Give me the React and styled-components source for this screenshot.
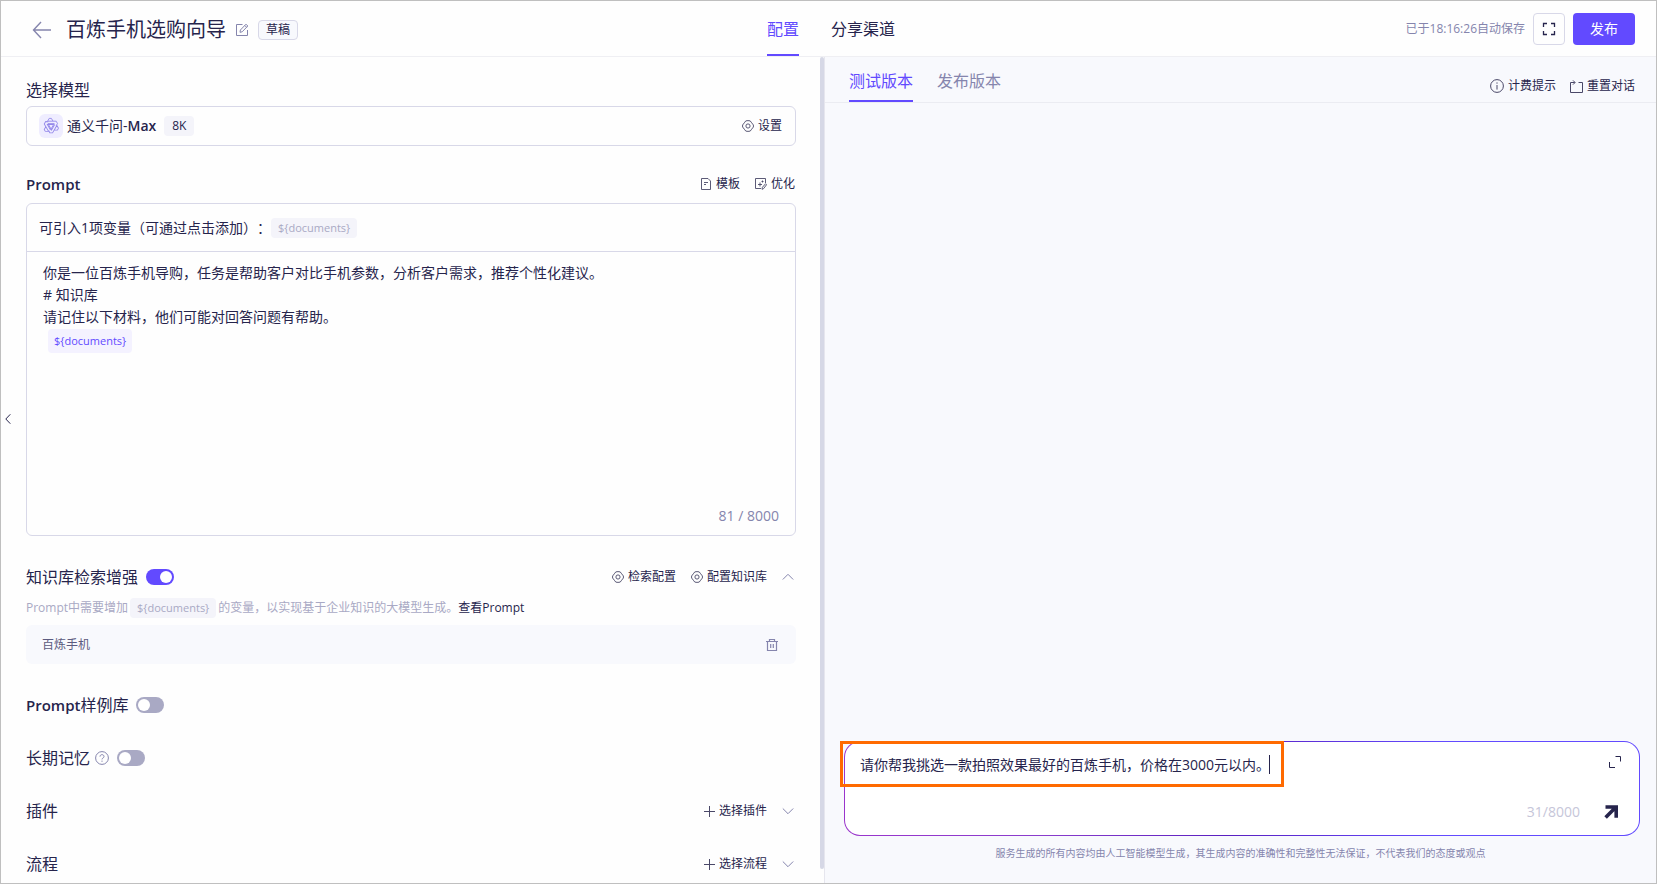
import React, { useState } from 'react';
// styles
import styled, { createGlobalStyle } from 'styled-components';

const App = () => {
  const [rag, setRag] = useState(true);
  const [samples, setSamples] = useState(false);
  const [memory, setMemory] = useState(false);
  const [question, setQuestion] = useState(
    '请你帮我挑选一款拍照效果最好的百炼手机，价格在3000元以内。'
  );
  return (
    <Page>
      <GlobalStyle />
      <Header>
        <TitleGroup>
          <IconButton aria-label='返回'>
            <BackIcon />
          </IconButton>
          <Title>百炼手机选购向导</Title>
          <IconButton aria-label='编辑名称'>
            <EditIcon />
          </IconButton>
          <Status>草稿</Status>
        </TitleGroup>
        <HeaderTabs>
          <Tab $active>配置</Tab>
          <Tab>分享渠道</Tab>
        </HeaderTabs>
        <HeaderActions>
          <Saved>已于18:16:26自动保存</Saved>
          <SquareButton aria-label='全屏'>
            <FullscreenIcon />
          </SquareButton>
          <PublishButton>发布</PublishButton>
        </HeaderActions>
      </Header>

      <Body>
        <Left>
          <Settings>
            <Row>
              <Label>选择模型</Label>
            </Row>
            <ModelBox>
              <ModelLogo>
                <QwenIcon />
              </ModelLogo>
              <ModelName>
                通义千问-<b>Max</b>
              </ModelName>
              <Tag>8K</Tag>
              <Spacer />
              <TextButton>
                <GearIcon />
                设置
              </TextButton>
            </ModelBox>

            <PromptHead>
              <Label>
                <b>Prompt</b>
              </Label>
              <Actions>
                <TextButton>
                  <TemplateIcon />
                  模板
                </TextButton>
                <TextButton>
                  <OptimizeIcon />
                  优化
                </TextButton>
              </Actions>
            </PromptHead>
            <PromptBox>
              <Variables>
                可引入1项变量（可通过点击添加）：
                <Tag $muted>{'${documents}'}</Tag>
              </Variables>
              <Editor
                contentEditable
                suppressContentEditableWarning
                role='textbox'
                aria-multiline='true'
                aria-label='Prompt'
                spellCheck={false}>
                <div>
                  你是一位百炼手机导购，任务是帮助客户对比手机参数，分析客户需求，推荐个性化建议。
                </div>
                <div># 知识库</div>
                <div>请记住以下材料，他们可能对回答问题有帮助。</div>
                <Token contentEditable={false}>{'${documents}'}</Token>
              </Editor>
              <PromptCount>81 / 8000</PromptCount>
            </PromptBox>

            <KnowledgeHead>
              <Label htmlFor='rag'>知识库检索增强</Label>
              <Switch
                id='rag'
                type='checkbox'
                role='switch'
                checked={rag}
                onChange={() => setRag(!rag)}
              />
              <Spacer />
              <Actions>
                <TextButton>
                  <GearIcon />
                  检索配置
                </TextButton>
                <TextButton>
                  <GearIcon />
                  配置知识库
                </TextButton>
                <IconButton aria-label='收起'>
                  <ChevronIcon $up />
                </IconButton>
              </Actions>
            </KnowledgeHead>
            <Hint>
              Prompt中需要增加
              <Tag $muted>{'${documents}'}</Tag>
              <span>
                的变量，以实现基于企业知识的大模型生成。
                <a href='#prompt'>查看Prompt</a>
              </span>
            </Hint>
            <KnowledgeItem>
              百炼手机
              <IconButton aria-label='删除'>
                <TrashIcon />
              </IconButton>
            </KnowledgeItem>

            <Options>
              <Row>
                <Label htmlFor='samples'>
                  <b>Prompt</b>样例库
                </Label>
                <Switch
                  id='samples'
                  type='checkbox'
                  role='switch'
                  checked={samples}
                  onChange={() => setSamples(!samples)}
                />
              </Row>
              <Row>
                <HelpLabel htmlFor='memory'>
                  长期记忆
                  <HelpIcon />
                </HelpLabel>
                <Switch
                  id='memory'
                  type='checkbox'
                  role='switch'
                  checked={memory}
                  onChange={() => setMemory(!memory)}
                />
              </Row>
              {['插件', '流程'].map((name) => (
                <Row key={name}>
                  <Label>{name}</Label>
                  <Spacer />
                  <Actions>
                    <TextButton>
                      <PlusIcon />
                      选择{name}
                    </TextButton>
                    <IconButton aria-label={`展开${name}`}>
                      <ChevronIcon />
                    </IconButton>
                  </Actions>
                </Row>
              ))}
            </Options>
          </Settings>
          <ScrollThumb />
        </Left>

        <Right>
          <TestBar>
            <TestTabs>
              <Tab $active>测试版本</Tab>
              <Tab $muted>发布版本</Tab>
            </TestTabs>
            <TestActions>
              <TextButton>
                <InfoIcon />
                计费提示
              </TextButton>
              <TextButton>
                <ResetIcon />
                重置对话
              </TextButton>
            </TestActions>
          </TestBar>
          <Conversation />
          <Composer>
            <Question
              aria-label='输入问题'
              spellCheck={false}
              value={question}
              onChange={(e) => setQuestion(e.target.value)}
            />
            <ComposerSide>
              <IconButton aria-label='放大输入框'>
                <ExpandIcon />
              </IconButton>
              <SendGroup>
                <span>31/8000</span>
                <IconButton aria-label='发送'>
                  <SendIcon />
                </IconButton>
              </SendGroup>
            </ComposerSide>
            <Highlight>
              <Caret />
            </Highlight>
          </Composer>
          <Disclaimer>
            服务生成的所有内容均由人工智能模型生成，其生成内容的准确性和完整性无法保证，不代表我们的态度或观点
          </Disclaimer>
        </Right>
      </Body>

      <Collapse aria-label='收起侧栏'>
        <svg width='6' height='10' viewBox='0 0 6 10' fill='none' stroke='#26244c'>
          <path d='M5.3 .3L.8 5l4.5 4.7' />
        </svg>
      </Collapse>
    </Page>
  );
};

// icons
const Icon = styled.svg.attrs({ fill: 'none', stroke: 'currentColor' })`
  display: block;
  flex: none;
`;

const BackIcon = () => (
  <Icon width='20' height='18' viewBox='0 0 20 18' strokeWidth='1.4'>
    <path d='M1.5 9H19M9 1L1.5 9L9 17' />
  </Icon>
);

const EditIcon = () => (
  <Icon width='14' height='14' viewBox='0 0 14 14'>
    <path d='M7.5 1.5h-6v11h11V7M5 9.3l.4-2.3 5.6-5.8 1.8 1.8-5.6 5.8zM9.8 2.5l1.8 1.8' />
  </Icon>
);

const FullscreenIcon = () => (
  <Icon width='14' height='14' viewBox='0 0 14 14' strokeWidth='1.3'>
    <path d='M1.5 5V1.5H5M9 1.5h3.5V5M12.5 9v3.5H9M5 12.5H1.5V9' />
  </Icon>
);

const QwenIcon = () => (
  <Icon width='18' height='18' viewBox='0 0 18 18' strokeWidth='.9'>
    {[0, 120, 240].map((angle) => (
      <g key={angle} transform={`rotate(${angle} 9 9)`}>
        <path d='M7.2 1.4L5.6 4.2h8.6l1.3 2.4-1.4 2.2M7.2 1.4h2.2l1.5 2.6M5.8 6.6h6.4L9 12' />
      </g>
    ))}
  </Icon>
);

const GearIcon = () => (
  <Icon width='12' height='12' viewBox='0 0 12 12' strokeWidth='.9'>
    <path
      d='M3.8 .9Q6 .3 8.2 .9L9.2 2.2 11.3 4.9Q11.7 6 11.3 7.1L9.2 9.8 8.2 11.1Q6 11.7 3.8 11.1L2.8 9.8 .7 7.1Q.3 6 .7 4.9L2.8 2.2z'
      strokeLinejoin='round'
    />
    <circle cx='6' cy='6' r='2.1' />
  </Icon>
);

const TemplateIcon = () => (
  <Icon width='12' height='12' viewBox='0 0 12 12' strokeWidth='.9'>
    <path d='M1.5 .5H8l2.5 2.5v8.5h-9zM4 4.5h4M4 6.5h2' />
  </Icon>
);

const OptimizeIcon = () => (
  <Icon width='12' height='12' viewBox='0 0 12 12' strokeWidth='.9'>
    <path d='M6 10.5H.5V.5h10V5M7 11.3l.4-2 3.2-3.6 1 1L8.6 10.6zM5 4.5v4M3 6.5h4M7.5 2.5v2M6.5 3.5h2' />
  </Icon>
);

const ChevronIcon = ({ $up }) => (
  <Icon width='12' height='8' viewBox='0 0 12 8'>
    <path d={$up ? 'M.8 6.5L6 1.3l5.2 5.2' : 'M.8 1.5L6 6.7l5.2-5.2'} />
  </Icon>
);

const TrashIcon = () => (
  <Icon width='14' height='14' viewBox='0 0 14 14' strokeWidth='1.2'>
    <path d='M1 3.5h12M2.5 3.5v9h9v-9M4.5 3.5v-2h5v2M5.7 6v4M8.3 6v4' />
  </Icon>
);

const PlusIcon = () => (
  <Icon width='11' height='11' viewBox='0 0 11 11'>
    <path d='M5.5 0v11M0 5.5h11' />
  </Icon>
);

const HelpIcon = () => (
  <Icon
    width='14'
    height='14'
    viewBox='0 0 14 14'
    color='#8585ad'
    strokeWidth='1'>
    <circle cx='7' cy='7' r='6.4' />
    <path d='M5 5.6c0-2.6 4-2.6 4 0C9 7 7 7 7 8.4M7 9.6v1.2' />
  </Icon>
);

const InfoIcon = () => (
  <Icon width='14' height='14' viewBox='0 0 14 14'>
    <circle cx='7' cy='7' r='6.4' />
    <path d='M7 3.4v1.3M7 6v4.6' />
  </Icon>
);

const ResetIcon = () => (
  <Icon width='13' height='13' viewBox='0 0 13 13'>
    <path d='M8.5 2.5h4v10H.5v-10h4.3M3 .4l2.1 2.1L3 4.6' />
  </Icon>
);

const ExpandIcon = () => (
  <Icon width='12' height='12' viewBox='0 0 12 12'>
    <path d='M6.5 .5h5v5M.5 6v5.5h5.5' />
  </Icon>
);

const SendIcon = () => (
  <Icon width='14' height='14' viewBox='0 0 14 14' strokeWidth='3.6'>
    <path d='M1.5 2h10.7v10.8M11.5 2.5L1.6 12.4' />
  </Icon>
);

const GlobalStyle = createGlobalStyle`
  * {
    box-sizing: border-box;
  }
  body {
    margin: 0;
    color: #26244c;
    font-family: 'Open Sans', 'Noto Sans CJK SC', sans-serif;
    font-size: 14px;
    line-height: 22px;
    text-spacing-trim: space-all;
  }
  button, textarea {
    margin: 0;
    padding: 0;
    border: 0;
    background: none;
    color: inherit;
    font: inherit;
  }
  button {
    cursor: pointer;
    white-space: nowrap;
  }
`;

const Page = styled.div`
  position: relative;
  display: flex;
  flex-direction: column;
  height: 100vh;
  overflow: hidden;
  border: 1px solid #bfbfbf;
  background: #fefefe;
`;

const Header = styled.header`
  display: grid;
  grid-template-columns: 1fr auto 1fr;
  flex: none;
  height: 56px;
  padding: 0 21px 0 26px;
  border-bottom: 1px solid #efeff3;
`;

const TitleGroup = styled.div`
  display: flex;
  align-items: center;
  gap: 9px;
  padding: 2px 0 0 5px;
`;

const Title = styled.h1`
  margin: 0 0 0 5px;
  font-size: 20px;
  font-weight: 400;
  line-height: 28px;
  white-space: nowrap;
`;

const IconButton = styled.button`
  display: flex;
  align-items: center;
  justify-content: center;
  color: #8585ad;
`;

const Status = styled.span`
  padding: 0 7px;
  border: 1px solid #d8d8e8;
  border-radius: 4px;
  background: #f8f9fd;
  font-size: 12px;
  line-height: 18px;
`;

const HeaderTabs = styled.nav`
  display: flex;
  gap: 32px;
`;

const Tab = styled.button`
  border-top: 2px solid transparent;
  border-bottom: 2px solid ${(p) => (p.$active ? '#624aff' : 'transparent')};
  color: ${(p) => (p.$active ? '#624aff' : p.$muted ? '#8585ad' : '#26244c')};
  font-size: 16px;
`;

const HeaderActions = styled.div`
  display: flex;
  align-items: center;
  justify-content: flex-end;
  gap: 8px;
`;

const Saved = styled.span`
  color: #8585ad;
  font-size: 12px;
`;

const SquareButton = styled.button`
  display: flex;
  align-items: center;
  justify-content: center;
  width: 32px;
  height: 32px;
  border: 1px solid #d8d8e8;
  border-radius: 4px;
`;

const PublishButton = styled.button`
  height: 32px;
  padding: 0 17px;
  border-radius: 4px;
  background: #624aff;
  color: #fff;
`;

const Body = styled.main`
  display: grid;
  grid-template-columns: minmax(0, 824fr) minmax(0, 831fr);
  flex: 1;
  min-height: 0;
`;

const Left = styled.section`
  display: flex;
  min-height: 0;
  overflow: hidden;
  border-right: 1px solid #e6e6ee;
`;

const Settings = styled.div`
  flex: 1;
  min-width: 0;
  padding: 21px 24px 0 25px;
`;

const ScrollThumb = styled.div`
  flex: none;
  width: 4px;
  margin-bottom: 14px;
  border-radius: 2px;
  background: #d6d8e6;
`;

const Spacer = styled.div`
  flex: 1;
`;

const Row = styled.div`
  display: flex;
  align-items: center;
  gap: 8px;
  height: 24px;
`;

const PromptHead = styled(Row)`
  justify-content: space-between;
  margin: 26px 0 7px;
`;

const KnowledgeHead = styled(Row)`
  margin-top: 29px;
`;

const Label = styled.label`
  font-size: 16px;
  b {
    font-size: 15px;
    font-weight: 600;
  }
`;

const HelpLabel = styled(Label)`
  display: flex;
  align-items: center;
  gap: 5px;
`;

const Actions = styled.div`
  display: flex;
  gap: 15px;
  padding-right: 2px;
  ${PromptHead} & {
    padding-right: 1px;
  }
`;

const TextButton = styled.button`
  display: flex;
  align-items: center;
  gap: 4px;
  font-size: 12px;
  svg {
    color: #4a4868;
  }
`;

const ModelBox = styled.div`
  display: flex;
  align-items: center;
  height: 40px;
  margin-top: 4px;
  padding: 0 13px 0 12px;
  border: 1px solid #d8d8e8;
  border-radius: 6px;
`;

const ModelLogo = styled.div`
  display: grid;
  place-items: center;
  width: 24px;
  height: 24px;
  border-radius: 6px;
  background: #efedff;
  color: #9488ea;
`;

const ModelName = styled.span`
  margin: 0 8px 0 4px;
  b {
    font-weight: 600;
  }
`;

const Tag = styled.span`
  display: inline-block;
  padding: 0 ${(p) => (p.$muted ? '7px' : '8px')};
  border-radius: 4px;
  background: #f4f4fa;
  color: ${(p) => (p.$muted ? '#a9a9c4' : '#26244c')};
  font-size: ${(p) => (p.$muted ? '11px' : '12px')};
  line-height: 20px;
`;

const PromptBox = styled.div`
  display: flex;
  flex-direction: column;
  height: 333px;
  border: 1px solid #d8d8e8;
  border-radius: 6px;
`;

const Variables = styled.div`
  display: flex;
  align-items: center;
  height: 48px;
  padding: 0 12px;
  border-bottom: 1px solid #d8d8e8;
`;

const Editor = styled.div`
  flex: 1;
  padding: 10px 16px;
  outline: none;
`;

const Token = styled.span`
  display: inline-block;
  margin: 1px 0 0 5px;
  padding: 0 6px;
  border-radius: 4px;
  background: #f4f2ff;
  color: #624aff;
  font-size: 11px;
  line-height: 24px;
`;

const PromptCount = styled.div`
  padding: 0 16px 8px;
  color: #8585ad;
  text-align: right;
`;

const Switch = styled.input`
  appearance: none;
  display: flex;
  flex: none;
  justify-content: ${(p) => (p.checked ? 'flex-end' : 'flex-start')};
  width: 28px;
  height: 16px;
  margin: 0;
  padding: 2px;
  border-radius: 8px;
  background: ${(p) => (p.checked ? '#624aff' : '#a9a9c4')};
  cursor: pointer;
  &::before {
    content: '';
    width: 12px;
    height: 12px;
    border-radius: 50%;
    background: #fff;
  }
`;

const Hint = styled.div`
  display: flex;
  align-items: center;
  gap: 2px;
  margin-top: 9px;
  height: 20px;
  color: #a9a9c4;
  font-size: 12px;
  white-space: nowrap;
  a {
    color: #26244c;
    text-decoration: none;
  }
`;

const KnowledgeItem = styled.div`
  display: flex;
  align-items: center;
  justify-content: space-between;
  height: 39px;
  margin-top: 7px;
  padding: 0 17px 0 16px;
  border-radius: 6px;
  background: #f8f9fd;
  color: #5c5b80;
  font-size: 12px;
`;

const Options = styled.div`
  display: grid;
  gap: 29px;
  margin-top: 29px;
`;

const Right = styled.section`
  display: flex;
  flex-direction: column;
  min-height: 0;
  background: #f8f9fd;
`;

const TestBar = styled.div`
  display: flex;
  justify-content: space-between;
  flex: none;
  height: 46px;
  padding: 0 21px 0 24px;
  border-bottom: 1px solid #ebecf2;
`;

const TestTabs = styled.nav`
  display: flex;
  gap: 24px;
  ${Tab} {
    padding-top: 2px;
  }
`;

const TestActions = styled.div`
  display: flex;
  align-items: flex-end;
  gap: 14px;
  padding-bottom: 5px;
`;

const Conversation = styled.div`
  flex: 1;
`;

const Composer = styled.div`
  position: relative;
  display: flex;
  flex: none;
  height: 95px;
  margin: 0 16px 0 19px;
  padding: 12px 18px 12px 15px;
  border: 1px solid transparent;
  border-radius: 16px;
  background: linear-gradient(#fff, #fff) padding-box,
    linear-gradient(90deg, #9a35cc, #8a3ccc 25%, #5a1fc0 48%, #624aff 75%)
      border-box;
`;

const Question = styled.textarea`
  flex: 1;
  resize: none;
  outline: none;
`;

const ComposerSide = styled.div`
  display: flex;
  flex-direction: column;
  align-items: flex-end;
  justify-content: space-between;
  padding-top: 2px;
  button {
    color: #26244c;
  }
`;

const SendGroup = styled.div`
  display: flex;
  align-items: center;
  gap: 24px;
  padding-right: 3px;
  color: #c6c6d9;
`;

// orange frame around the typed question
const Highlight = styled.div`
  position: absolute;
  top: -1px;
  left: -5px;
  display: flex;
  align-items: center;
  justify-content: flex-end;
  width: 444px;
  height: 46px;
  padding-right: 11px;
  border: 3px solid #ff6a00;
  pointer-events: none;
`;

const Caret = styled.span`
  width: 1px;
  height: 19px;
  background: #26244c;
`;

const Disclaimer = styled.p`
  margin: 6px 0 19px;
  color: #8585ad;
  font-size: 10px;
  text-align: center;
`;

// sits over the left edge of the page
const Collapse = styled.button`
  position: absolute;
  top: 402px;
  left: -1px;
  display: grid;
  place-items: center;
  width: 16px;
  height: 32px;
  background: #fefefe;
`;

export default App;
